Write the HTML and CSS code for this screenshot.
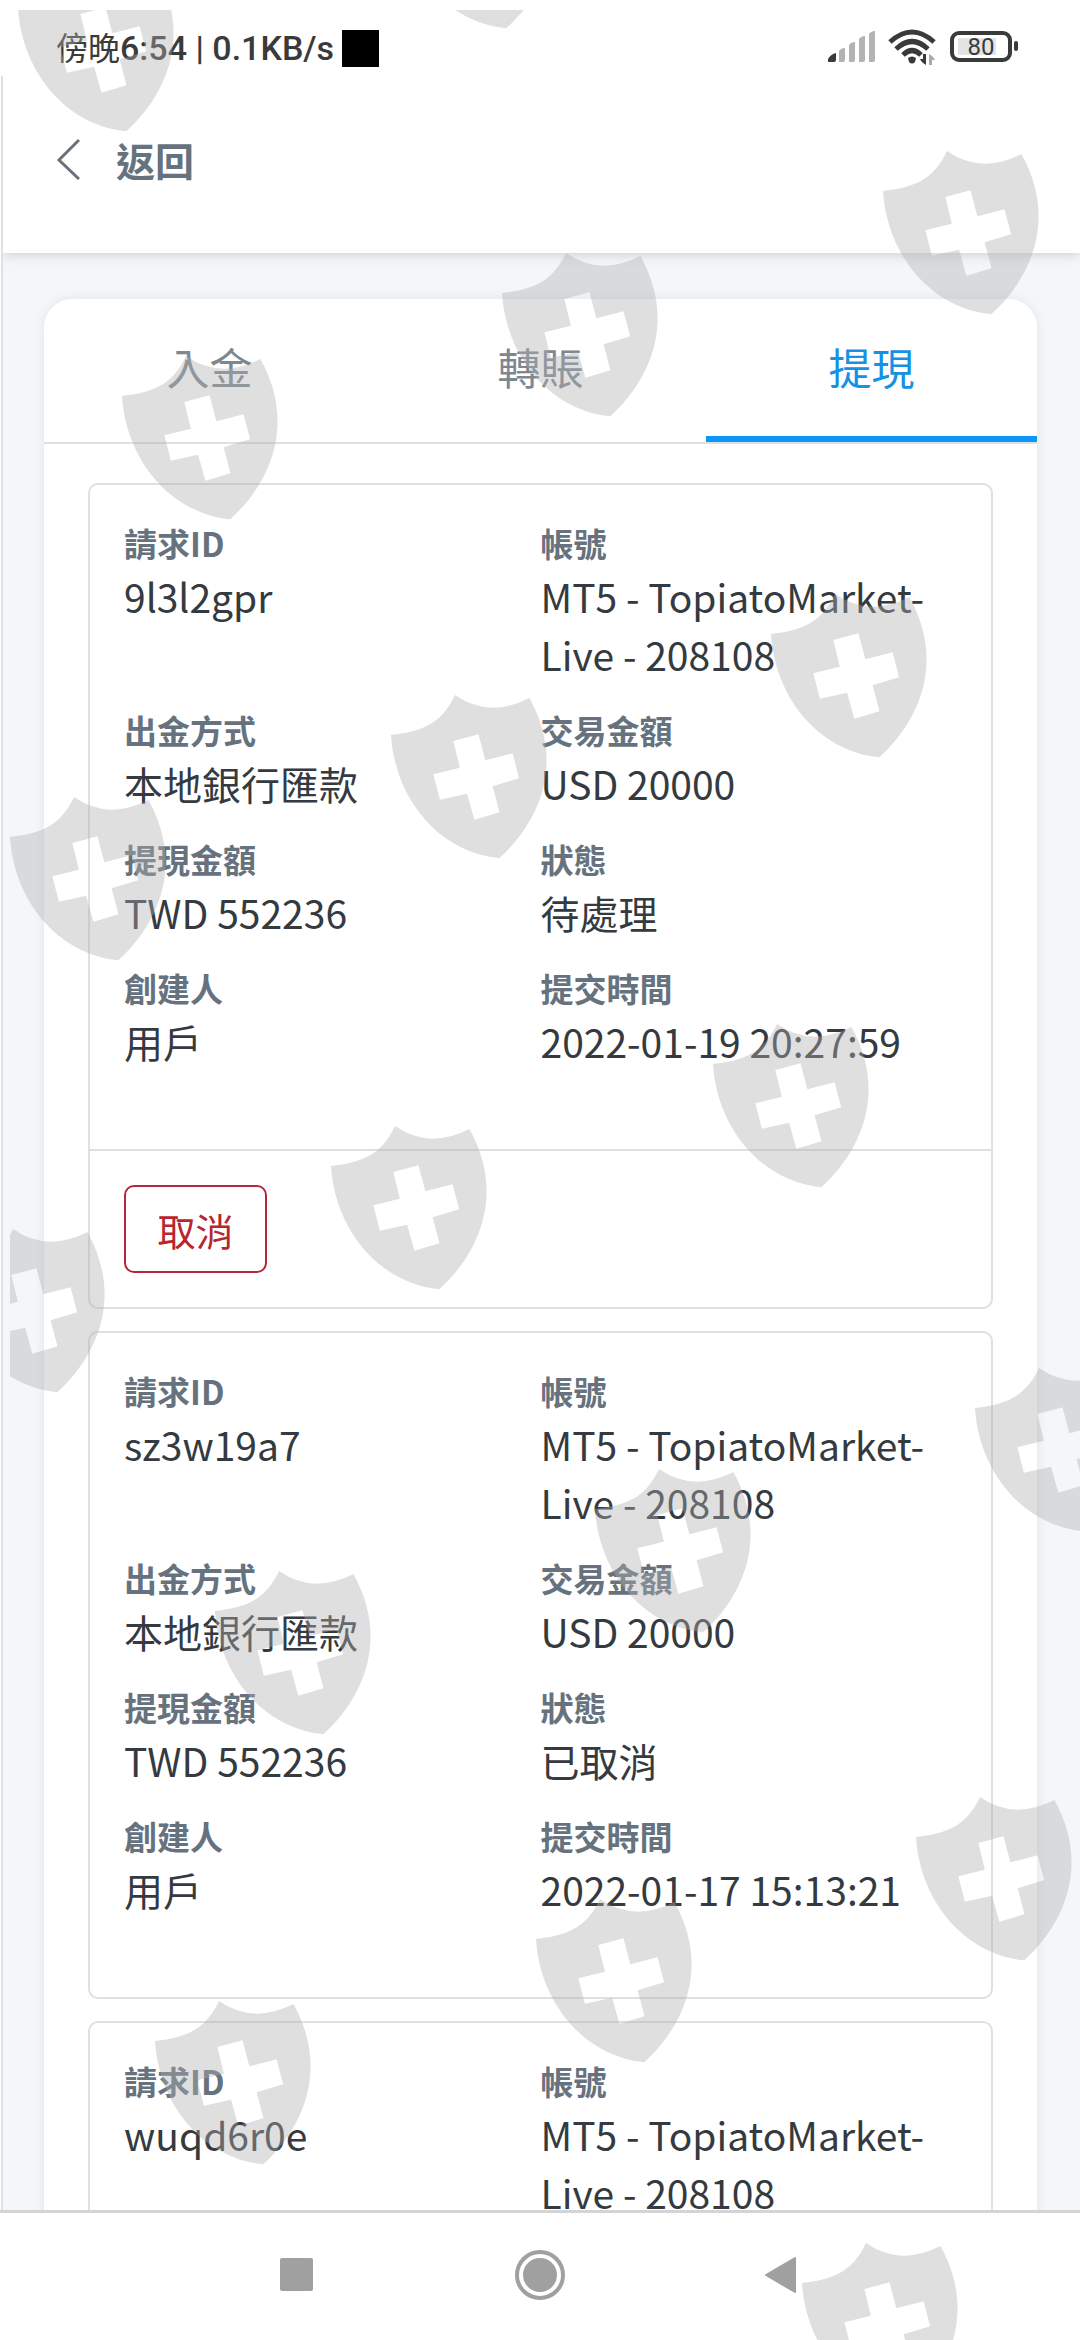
FILE: index.html
```html
<!DOCTYPE html>
<html lang="zh-Hant">
<head>
<meta charset="utf-8">
<meta name="viewport" content="width=device-width, initial-scale=1">
<title>提現</title>
<link rel="stylesheet" href="styles.css">
</head>
<body>
<div class="screen">
  <div class="status">
    <div class="status-left"><span><span class="status-time">傍晚</span>6:54 | 0.1KB/s</span><i class="block"></i></div>
    <svg class="status-icons" width="192" height="40" viewBox="0 0 192 40" aria-hidden="true">
      <path fill="#3a3a3a" d="M0 34v-3q3-5 8-6v7q0 2-2 2z"/>
      <g fill="#b3b3b3">
        <path d="M11 34V23q2-3 6-3v12q0 2-2 2z"/><path d="M21 34V17q2-3 6-3v18q0 2-2 2z"/><path d="M31 34V11q2-3 6-3v24q0 2-2 2z"/><path d="M41 34V6q2-3 6-3v29q0 2-2 2z"/>
      </g>
      <g fill="none" stroke="#3a3a3a" stroke-width="5">
        <path d="M62 14Q84-6 106 14"/><path d="M68 21Q84 6 100 21"/><path d="M75 27Q84 18 93 27"/>
      </g>
      <path d="M80 30q4-3 8 0l-1 4q-3 3-6 0z" fill="#3a3a3a"/>
      <path d="M95 26h3v11q-5-3-6-6h3z" fill="#3a3a3a"/><path d="M101 37V26q5 3 6 6h-3v5z" fill="#aaa"/>
      <rect x="124" y="5" width="58" height="27" rx="7" fill="none" stroke="#3a3a3a" stroke-width="4"/>
      <rect x="130" y="10" width="38" height="17" fill="#e4e4e4"/>
      <rect x="186" y="13" width="4" height="10" rx="2" fill="#3a3a3a"/>
      <text class="battery" x="153" y="27" text-anchor="middle">80</text>
    </svg>
  </div>
  <div class="page">
    <header class="topbar">
      <a class="back" href="#">
        <svg width="24" height="42" viewBox="0 0 24 42" aria-hidden="true"><path d="M23 2L3 22l20 19" fill="none" stroke="#66727e" stroke-width="3"/></svg>
        <span>返回</span>
      </a>
    </header>
    <main class="content">
      <section class="panel">
        <nav class="tabs">
          <button class="tab" type="button">入金</button>
          <button class="tab" type="button">轉賬</button>
          <button class="tab tab-active" type="button">提現</button>
        </nav>
        <div class="list">
          <article class="item">
            <dl class="fields">
              <div><dt>請求ID</dt><dd>9l3l2gpr</dd></div>
              <div><dt>帳號</dt><dd>MT5 - TopiatoMarket-Live - 208108</dd></div>
              <div><dt>出金方式</dt><dd>本地銀行匯款</dd></div>
              <div><dt>交易金額</dt><dd>USD 20000</dd></div>
              <div><dt>提現金額</dt><dd>TWD 552236</dd></div>
              <div><dt>狀態</dt><dd>待處理</dd></div>
              <div><dt>創建人</dt><dd>用戶</dd></div>
              <div><dt>提交時間</dt><dd>2022-01-19 20:27:59</dd></div>
            </dl>
            <div class="actions"><button class="cancel" type="button">取消</button></div>
          </article>
          <article class="item">
            <dl class="fields">
              <div><dt>請求ID</dt><dd>sz3w19a7</dd></div>
              <div><dt>帳號</dt><dd>MT5 - TopiatoMarket-Live - 208108</dd></div>
              <div><dt>出金方式</dt><dd>本地銀行匯款</dd></div>
              <div><dt>交易金額</dt><dd>USD 20000</dd></div>
              <div><dt>提現金額</dt><dd>TWD 552236</dd></div>
              <div><dt>狀態</dt><dd>已取消</dd></div>
              <div><dt>創建人</dt><dd>用戶</dd></div>
              <div><dt>提交時間</dt><dd>2022-01-17 15:13:21</dd></div>
            </dl>
          </article>
          <article class="item">
            <dl class="fields">
              <div><dt>請求ID</dt><dd>wuqd6r0e</dd></div>
              <div><dt>帳號</dt><dd>MT5 - TopiatoMarket-Live - 208108</dd></div>
            </dl>
          </article>
        </div>
      </section>
    </main>
  </div>
  <nav class="navbar">
    <button type="button" aria-label="Recent apps"><svg width="50" height="50" viewBox="0 0 50 50"><rect x="9" y="8" width="33" height="33" rx="2" fill="#a0a0a0"/></svg></button>
    <button type="button" aria-label="Home"><svg width="50" height="50" viewBox="0 0 50 50"><circle cx="25" cy="25" r="23" fill="none" stroke="#a0a0a0" stroke-width="4"/><circle cx="25" cy="25" r="17" fill="#a0a0a0"/></svg></button>
    <button type="button" aria-label="Back"><svg width="50" height="50" viewBox="0 0 50 50"><path d="M7 25L36 8v34z" fill="#a0a0a0" stroke="#a0a0a0" stroke-width="2" stroke-linejoin="round"/></svg></button>
  </nav>
  <svg class="watermark" aria-hidden="true">
    <defs>
      <path id="shield" transform="scale(.3444 .3333)" fill-rule="evenodd" d="M0 120C85 110 145 90 186 0Q284 71 402 9C440 80 455 150 451 215C446 320 390 420 314 490C130 470 10 300 0 120ZM181 138L254 118L274 196L353 175L372 250L295 274L315 352L242 374L221 296L142 314L123 238L200 218Z"/>
    </defs>
    <g transform="translate(-10 -10)">
      <use href="#shield" x="18" y="-32"/><use href="#shield" x="398" y="-135"/>
      <use href="#shield" x="122" y="356"/><use href="#shield" x="502" y="253"/><use href="#shield" x="883" y="151"/>
      <use href="#shield" x="10" y="797"/><use href="#shield" x="391" y="695"/><use href="#shield" x="771" y="594"/>
      <use href="#shield" x="-51" y="1229"/><use href="#shield" x="331" y="1126"/><use href="#shield" x="713" y="1024"/>
      <use href="#shield" x="215" y="1571"/><use href="#shield" x="595" y="1469"/><use href="#shield" x="975" y="1368"/>
      <use href="#shield" x="155" y="2001"/><use href="#shield" x="536" y="1899"/><use href="#shield" x="916" y="1797"/>
      <use href="#shield" x="802" y="2243"/>
    </g>
  </svg>
</div>
</body>
</html>
```
FILE: styles.css
```css
* { box-sizing: border-box; }

body {
  margin: 0;
  background: #fff;
  color: #343a40;
  font-family: "Noto Sans CJK TC", sans-serif;
}

button {
  margin: 0;
  padding: 0;
  border: 0;
  background: none;
  font-family: inherit;
  cursor: pointer;
}

.screen {
  position: relative;
  display: flex;
  flex-direction: column;
  height: 100vh;
  overflow: hidden;
}

/* system status bar */
.status {
  flex: none;
  display: flex;
  justify-content: space-between;
  align-items: center;
  height: 76px;
  padding: 20px 60px 0 56px;
}
.status-left {
  display: flex;
  align-items: center;
  gap: 8px;
  color: #3a3a3a;
  font: 500 34px/40px Roboto, "Noto Sans CJK TC", sans-serif;
}
.status-time { font-weight: 400; font-size: 32px; }
.block { width: 37px; height: 37px; background: #000; }
.battery { font: 400 24px Roboto, sans-serif; fill: #3a3a3a; }

/* app page */
.page {
  flex: 1;
  min-height: 0;
  display: flex;
  flex-direction: column;
  overflow: hidden;
  margin-left: 1px;
  border-left: 2px solid #dce1e6;
  background: #f3f7fa;
}
.topbar {
  flex: none;
  height: 177px;
  padding: 55px 53px;
  background: #fff;
  box-shadow: 0 1px 12px rgba(0, 0, 0, .18);
}
.back {
  display: inline-flex;
  align-items: center;
  gap: 36px;
  color: #66727e;
  font-size: 39px;
  font-weight: 700;
  line-height: 56px;
  text-decoration: none;
}
.content { flex: none; padding: 46px 43px 0 41px; }
.panel {
  background: #fff;
  border-radius: 28px;
  box-shadow: 0 0 12px rgba(0, 0, 0, .08);
}
.tabs {
  display: grid;
  grid-template-columns: repeat(3, 1fr);
  border-bottom: 2px solid #dee0e2;
}
.tab {
  height: 143px;
  padding-bottom: 4px;
  border-bottom: 6px solid transparent;
  color: #7c8792;
  font-size: 43px;
}
.tab-active { border-color: #0c96f6; color: #1592e4; }

.list {
  display: flex;
  flex-direction: column;
  gap: 22px;
  padding: 39px 44px;
}
.item {
  border: 2px solid #dfe0e1;
  border-radius: 10px;
}
.fields {
  display: grid;
  grid-template-columns: 1fr 1fr;
  row-gap: 23px;
  margin: 0;
  padding: 34px 34px 79px;
}
.fields dt {
  color: #66727e;
  font-size: 33px;
  font-weight: 700;
  line-height: 48px;
}
.fields dd {
  margin: 0;
  font-size: 39px;
  line-height: 58px;
}
.actions {
  padding: 34px;
  border-top: 2px solid #dfe0e1;
}
.cancel {
  display: block;
  width: 143px;
  height: 88px;
  border: 2px solid #b8263a;
  border-radius: 10px;
  color: #b8262f;
  font-size: 38px;
}

/* system navigation */
.navbar {
  flex: none;
  display: flex;
  justify-content: center;
  align-items: center;
  gap: 194px;
  height: 130px;
  padding-bottom: 3px;
  border-top: 3px solid #d4d4d4;
  background: #fff;
}
.navbar button, .navbar svg { display: block; }

.watermark {
  position: absolute;
  top: 10px;
  left: 10px;
  width: calc(100% - 10px);
  height: calc(100% - 10px);
  fill: rgba(175, 175, 175, .4);
  pointer-events: none;
}
```
